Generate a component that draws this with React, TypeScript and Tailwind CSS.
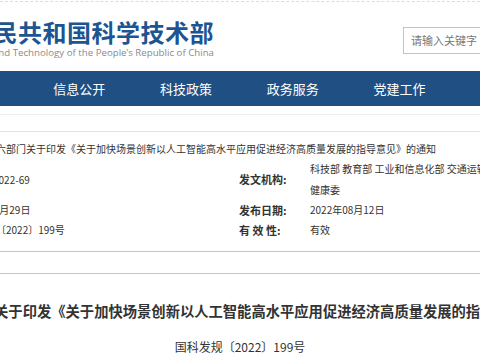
const cjk = "font-['Noto_Sans_CJK_SC','Noto_Sans',sans-serif]";

const navItems = ["首页", "信息公开", "科技政策", "政务服务", "党建工作", "互动交流"];

function InfoRow({
  left,
  label,
  children,
  className,
}: {
  left: React.ReactNode;
  label: string;
  children: React.ReactNode;
  className: string;
}) {
  return (
    <div className={`flex items-center ${className}`}>
      <div className="w-[283px] shrink-0 whitespace-nowrap text-[10px] text-[#333]">{left}</div>
      <div className="w-[71px] shrink-0 whitespace-pre text-[11px] font-bold text-[#333]">{label}</div>
      <div className="whitespace-nowrap text-[10px] text-[#333]">{children}</div>
    </div>
  );
}

export default function App() {
  return (
    <div className={`relative h-[360px] w-[480px] overflow-hidden bg-white ${cjk}`}>
      {/* header */}
      <div className="mt-[1px] flex h-[70px] border-t border-dashed border-[#dcdcdc]">
        <div className="flex w-[214px] shrink-0 flex-col items-end overflow-hidden pt-[17px]">
          <div className="whitespace-nowrap text-[24px] font-bold leading-[26px] tracking-[0.5px] text-[#1d5592]">
            中华人民共和国科学技术部
          </div>
          <div className="mt-[2px] whitespace-nowrap font-['Open_Sans',sans-serif] text-[9.7px] leading-[12px] text-[#8a8a8a]">
            Ministry of Science and Technology of the People’s Republic of China
          </div>
        </div>
        <div className="ml-auto mt-[25px] flex h-[27px] w-[100px] shrink-0 translate-x-[23px] items-center border border-[#b5c5dc] pl-[7px] text-[11px] text-[#777]">
          请输入关键字
        </div>
      </div>

      {/* nav */}
      <div className="flex h-[35px] items-center bg-[#204f84] pl-[26px]">
        {navItems.slice(1, 5).map((item) => (
          <div key={item} className="w-[106.7px] text-center text-[13px] leading-[35px] text-white">
            {item}
          </div>
        ))}
      </div>

      <div className="mt-[8px] border-t border-[#ececec]" />
      <div className="mt-[16px] border-t border-[#e2e2e2]" />

      {/* info table */}
      <div className="-ml-[44px]">
        <div className="mt-[7px] whitespace-nowrap text-[10px] leading-[19px] text-[#333]">
          科技部等六部门关于印发《关于加快场景创新以人工智能高水平应用促进经济高质量发展的指导意见》的通知
        </div>
        <InfoRow className="h-[42px] leading-[21px]" left={<span className="ml-[37px]">2022-69</span>} label="发文机构:">
          科技部 教育部 工业和信息化部 交通运输部 农业农村部 国家卫生
          <br />
          健康委
        </InfoRow>
        <InfoRow className="h-[20px] leading-[20px]" left="2022年07月29日" label="发布日期:">
          2022年08月12日
        </InfoRow>
        <InfoRow className="h-[20px] leading-[20px]" left="国科发规〔2022〕199号" label="有 效 性:">
          有效
        </InfoRow>
      </div>

      <div className="mt-[11px] border-t border-[#c4c4c4]" />
      <div className="mt-[21px] border-t border-[#c4c4c4]" />

      <div className="-ml-[106px] mt-[27px] whitespace-nowrap text-[14.3px] font-bold leading-[20px] text-[#333]">
        科技部等六部门关于印发《关于加快场景创新以人工智能高水平应用促进经济高质量发展的指导意见》的通知
      </div>
      <div className="mt-[16px] text-center text-[12px] leading-[20px] text-[#333]">国科发规〔2022〕199号</div>
    </div>
  );
}
